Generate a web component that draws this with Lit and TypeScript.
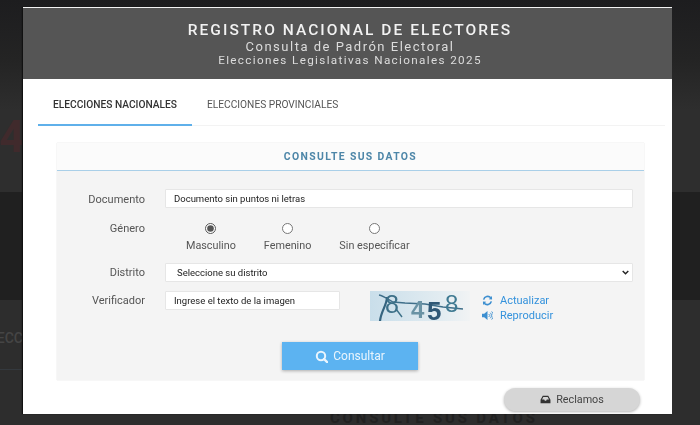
import { LitElement, html, css, svg } from "lit";
import { customElement } from "lit/decorators.js";

const searchIcon = svg`<circle cx="6" cy="6" r="4.2" fill="none" stroke="currentColor" stroke-width="2"/><path d="M9 9l3.6 3.6" stroke="currentColor" stroke-width="2.4" stroke-linecap="round"/>`;
const refreshIcon = svg`<path d="M1.8 5A4.6 4.6 0 0 1 9.6 3" fill="none" stroke="currentColor" stroke-width="1.8"/><path d="M7.4 4.6L11 4.8 10.8 1z" fill="currentColor"/><path d="M10.2 7A4.6 4.6 0 0 1 2.4 9" fill="none" stroke="currentColor" stroke-width="1.8"/><path d="M4.6 7.4L1 7.2 1.2 11z" fill="currentColor"/>`;
const volumeIcon = svg`<path d="M0 4h2.4L6 1v10L2.4 8H0z" fill="currentColor"/><path d="M7.4 4.4a2 2 0 0 1 0 3.2M9 3a4 4 0 0 1 0 6M10.5 1.6a6 6 0 0 1 0 8.8" fill="none" stroke="currentColor" stroke-width="1"/>`;
const inboxIcon = svg`<path d="M3 2h6l2.4 4.4V10H.6V6.4z M3.6 3.2L2.2 6h2.4l.7 1.3h1.4L7.4 6h2.4L8.4 3.2z" fill="currentColor" fill-rule="evenodd"/>`;

@customElement("app-root")
export class AppRoot extends LitElement {
  static styles = css`
    :host {
      display: block;
      position: relative;
      width: 700px;
      height: 425px;
      overflow: hidden;
      font-family: Roboto, "Liberation Sans", sans-serif;
    }
    .backdrop {
      height: 425px;
      display: flex;
      flex-direction: column;
      background: #2c2c2c;
    }
    .band-top {
      height: 192px;
      box-sizing: border-box;
      padding-top: 112px;
      background: linear-gradient(#1d1d1f 0, #242424 60px, #2e2e2e 110px);
      color: #402a2c;
      font-size: 44px;
      font-weight: 700;
      line-height: 50px;
      text-indent: -1px;
    }
    .band-mid {
      height: 108px;
      background: #202020;
    }
    .band-low {
      height: 125px;
      box-sizing: border-box;
      padding-top: 27px;
      background: #2d2d2d;
      color: #454545;
      font-size: 14px;
      font-weight: 500;
      line-height: 22px;
    }
    .ecc {
      height: 42px;
      width: 23px;
      display: flex;
      justify-content: flex-end;
      overflow: hidden;
      border-bottom: 1px solid #34393e;
    }
    .behind {
      margin: 40px 0 0 330px;
      color: #212121;
      font-size: 15px;
      font-weight: 700;
      letter-spacing: 2.8px;
      line-height: 16px;
      white-space: nowrap;
    }
    .modal {
      position: absolute;
      left: 23px;
      top: 7px;
      width: 649px;
      height: 407px;
      box-sizing: border-box;
      border-top: 1px solid #f4f4f4;
      background: #fff;
      display: flex;
      flex-direction: column;
      box-shadow: -1px 0 1px #111;
      filter: blur(0.3px);
    }
    header {
      height: 71px;
      flex: none;
      box-sizing: border-box;
      padding: 12px 0 0 5px;
      background: #555;
      text-align: center;
      color: #dcdcdc;
      font-size: 13px;
      letter-spacing: 1.5px;
      line-height: 14px;
    }
    header h1 {
      margin: 0;
      color: #f2f2f2;
      font-size: 15.5px;
      font-weight: 500;
      letter-spacing: 2.05px;
      line-height: 20px;
    }
    header p {
      margin: 0;
    }
    header .sub {
      letter-spacing: 1.35px;
      font-size: 11.7px;
      line-height: 13px;
    }
    .tabs {
      display: flex;
      height: 47px;
      flex: none;
      margin: 0 7px 0 15px;
      border-bottom: 1px solid #f3f3f3;
      box-sizing: border-box;
    }
    .tab {
      padding: 0 15px;
      line-height: 52px;
      font-size: 10.2px;
      color: #555;
      white-space: nowrap;
    }
    .tab.active {
      width: 154px;
      box-sizing: border-box;
      color: #333;
      font-weight: 500;
      border-bottom: 2px solid #5fb0ea;
      height: 47px;
    }
    .panel {
      margin: 17px 28px 0 34px;
      height: 237px;
      flex: none;
      box-sizing: border-box;
      background: #f4f4f4;
      box-shadow: 0 0 1px #ccc;
    }
    .panel-title {
      height: 28px;
      box-sizing: border-box;
      border-bottom: 1px solid #a9cfe8;
      background: #fbfbfb;
      text-align: center;
      color: #4d86a8;
      font-size: 10.4px;
      font-weight: 700;
      letter-spacing: 1.35px;
      line-height: 27px;
    }
    form {
      display: grid;
      grid-template-columns: 88px 1fr;
      column-gap: 20px;
      padding: 18px 11px 0 0;
      color: #555;
      font-size: 11px;
    }
    label.name {
      text-align: right;
      line-height: 22px;
    }
    label.gender-name {
      line-height: 13px;
      padding-top: 11px;
    }
    label.district-name {
      line-height: 19px;
      margin-top: 12px;
    }
    label.verify-name {
      line-height: 20px;
      margin-top: 9px;
    }
    input.text,
    select {
      box-sizing: border-box;
      height: 19px;
      width: 100%;
      border: 1px solid #e6e6e6;
      background: #fff;
      padding: 0 8px;
      margin: 0;
      font: 9.5px Roboto, "Liberation Sans", sans-serif;
      color: #222;
      border-radius: 1px;
    }
    input.text::placeholder {
      color: #222;
      opacity: 1;
    }
    select {
      appearance: none;
      padding: 0 11px;
      display: block;
    }
    .select-wrap {
      position: relative;
      margin-top: 12px;
    }
    .select-wrap svg {
      position: absolute;
      right: 4px;
      top: 7px;
      width: 7px;
      height: 5px;
      color: #222;
    }
    .radios {
      display: flex;
      gap: 28px;
      padding: 12px 0 0 21px;
      height: 40px;
      box-sizing: border-box;
      font-size: 10.8px;
    }
    .radio {
      display: flex;
      flex-direction: column;
      align-items: center;
      gap: 5px;
      line-height: 13px;
    }
    .radio input {
      margin: 0;
      width: 11px;
      height: 11px;
      accent-color: #555;
    }
    .verify {
      margin-top: 9px;
      display: flex;
      align-items: flex-start;
    }
    .verify input {
      width: 175px;
      flex: none;
    }
    .captcha {
      display: block;
      width: 100px;
      height: 30px;
      margin-left: 30px;
      flex: none;
    }
    .links {
      margin-left: 12px;
      padding-top: 4px;
      display: flex;
      flex-direction: column;
      gap: 4px;
      color: #3492dc;
      font-size: 11px;
      line-height: 11px;
      white-space: nowrap;
    }
    .links span {
      display: flex;
      align-items: center;
    }
    .links svg {
      width: 11px;
      height: 11px;
      margin-right: 7px;
      color: #3d8fd0;
    }
    .submit {
      grid-column: 1 / -1;
      justify-self: center;
      margin: 21px 0 0 10px;
      width: 136px;
      height: 28px;
      border: 0;
      background: #5cb3f1;
      color: #eaf5fd;
      font: 12px Roboto, "Liberation Sans", sans-serif;
      display: flex;
      align-items: center;
      justify-content: center;
      gap: 5px;
      box-shadow: 0 1px 3px rgba(0, 0, 0, 0.3);
    }
    .submit svg {
      width: 13px;
      height: 13px;
    }
    .foot {
      display: flex;
      justify-content: flex-end;
      padding: 8px 32px 0 0;
    }
    .claims {
      width: 136px;
      height: 23px;
      border: 0;
      border-radius: 12px;
      background: #d6d6d6;
      color: #444;
      font: 10.8px Roboto, "Liberation Sans", sans-serif;
      display: flex;
      align-items: center;
      justify-content: center;
      gap: 5px;
      box-shadow: 0 1px 3px rgba(0, 0, 0, 0.3);
    }
    .claims svg {
      width: 11px;
      height: 11px;
      color: #333;
    }
  `;

  render() {
    return html`
      <div class="backdrop">
        <div class="band-top">4</div>
        <div class="band-mid"></div>
        <div class="band-low">
          <div class="ecc">ECC</div>
          <div class="behind">CONSULTE SUS DATOS</div>
        </div>
      </div>
      <div class="modal">
        <header>
          <h1>REGISTRO NACIONAL DE ELECTORES</h1>
          <p>Consulta de Padrón Electoral</p>
          <p class="sub">Elecciones Legislativas Nacionales 2025</p>
        </header>
        <nav class="tabs">
          <div class="tab active">ELECCIONES NACIONALES</div>
          <div class="tab">ELECCIONES PROVINCIALES</div>
        </nav>
        <section class="panel">
          <div class="panel-title">CONSULTE SUS DATOS</div>
          <form>
            <label class="name">Documento</label>
            <input class="text" placeholder="Documento sin puntos ni letras" />

            <label class="name gender-name">Género</label>
            <div class="radios">
              <label class="radio"><input type="radio" name="g" checked />Masculino</label>
              <label class="radio"><input type="radio" name="g" />Femenino</label>
              <label class="radio"><input type="radio" name="g" />Sin especificar</label>
            </div>

            <label class="name district-name">Distrito</label>
            <div class="select-wrap">
              <select><option>Seleccione su distrito</option></select>
              <svg viewBox="0 0 7 5"><path d="M.7 1l2.800 2.800L6.300 1" fill="none" stroke="currentColor" stroke-width="1.400" /></svg>
            </div>

            <label class="name verify-name">Verificador</label>
            <div class="verify">
              <input class="text" placeholder="Ingrese el texto de la imagen" />
              ${this.renderCaptcha()}
              <div class="links">
                <span><svg viewBox="0 0 12 12">${refreshIcon}</svg>Actualizar</span>
                <span><svg viewBox="0 0 12 12">${volumeIcon}</svg>Reproducir</span>
              </div>
            </div>

            <button class="submit" type="button">
              <svg viewBox="0 0 13 13">${searchIcon}</svg>Consultar
            </button>
          </form>
        </section>
        <div class="foot">
          <button class="claims" type="button">
            <svg viewBox="0 0 12 12">${inboxIcon}</svg>Reclamos
          </button>
        </div>
      </div>
    `;
  }

  renderCaptcha() {
    return html`<svg class="captcha" viewBox="0 0 100 30">
      <defs>
        <linearGradient id="cap" x1="0" x2="1" y1="0" y2="0">
          <stop offset="0" stop-color="#c9deea" />
          <stop offset="0.7" stop-color="#e2ecf1" />
          <stop offset="1" stop-color="#f1f3f4" />
        </linearGradient>
      </defs>
      <rect width="100" height="30" fill="url(#cap)" />
      <path d="M9 4c5 1 10 5 14 7l12 1 20 1 18 3 20 2" fill="none" stroke="#3f6f8a" stroke-width="1.3" />
      <path d="M17 6c0 8-6 14-7 24" fill="none" stroke="#35647f" stroke-width="2.2" />
      <text x="15" y="22" font-family="Liberation Sans" font-size="25" fill="#3d7088">8</text>
      <path d="M26 18l6 8" stroke="#3d7088" stroke-width="1.4" />
      <text x="41" y="27" font-family="Liberation Sans" font-size="24" font-weight="700" fill="#6a93a5">4</text>
      <text x="57" y="29" font-family="Liberation Sans" font-size="26" font-weight="700" fill="#2f5876">5</text>
      <text x="75" y="21" font-family="Liberation Sans" font-size="24" fill="#3f7a92">8</text>
    </svg>`;
  }
}
